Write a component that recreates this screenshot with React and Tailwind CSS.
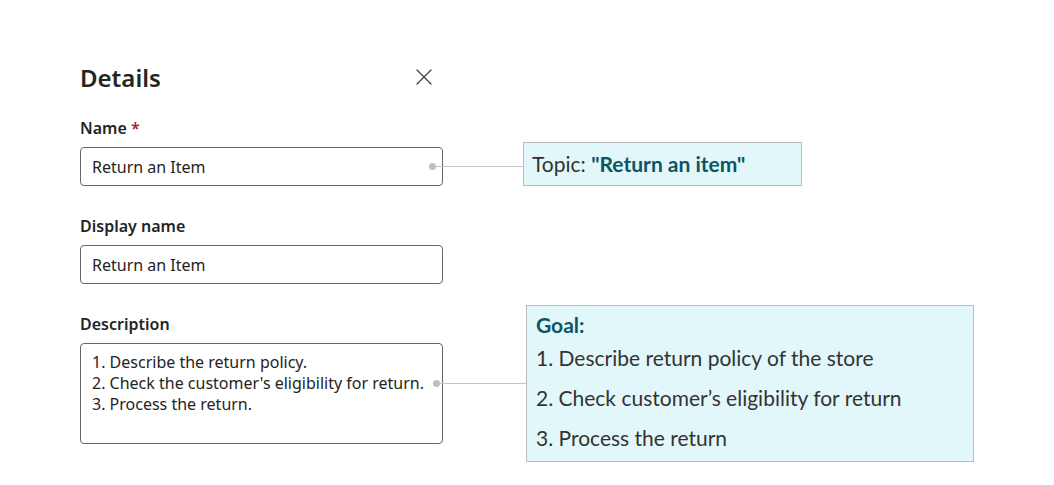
import React from 'react';

const formFont = { fontFamily: '"Noto Sans", "Open Sans", sans-serif' };
const noteFont = { fontFamily: 'Lato, "Noto Sans", sans-serif' };

const Connector = ({ className }) => (
  <div className={`relative flex items-center ${className}`}>
    <span className="w-[7px] h-[7px] rounded-full bg-[#bdbdbd]" />
    <span className="flex-1 h-px bg-[#c4c4c4]" />
  </div>
);

const Label = ({ children, className = '' }) => (
  <div className={`text-[16px] leading-[22px] font-semibold text-[#242424] ${className}`}>{children}</div>
);

const App = () => {
  return (
    <div className="min-h-screen bg-white pl-[80px] pt-[62px]" style={formFont}>
      {/* Header */}
      <div className="w-[363px] flex items-center justify-between">
        <h1 className="text-[24px] leading-[32px] font-semibold text-[#242424]">Details</h1>
        <svg className="w-[16px] h-[16px] mr-[11px] -mt-[2px]" viewBox="0 0 16 16" fill="none">
          <path d="M1 1L15 15M15 1L1 15" stroke="#424242" strokeWidth="1.3" strokeLinecap="round" />
        </svg>
      </div>

      {/* Name */}
      <Label className="mt-[23px]">
        Name <span className="text-[#a4262c]">*</span>
      </Label>
      <div className="mt-[8px] flex items-start">
        <div className="w-[363px] h-[39px] flex items-center px-[11px] border border-[#666] rounded-[4px] bg-white text-[16px] leading-[22px] text-[#242424]">
          Return an Item
        </div>
        <Connector className="-ml-[14px] w-[94px] mt-[16px]" />
        <div
          className="-mt-[5px] w-[279px] h-[44px] flex items-center px-[8px] bg-[#e2f7f9] border border-[#bcbcbc] text-[21px] text-[#333]"
          style={noteFont}
        >
          Topic:&nbsp;<span className="font-bold text-[#0b5566]">"Return an item"</span>
        </div>
      </div>

      {/* Display name */}
      <Label className="mt-[29px]">Display name</Label>
      <div className="mt-[8px] w-[363px] h-[39px] flex items-center px-[11px] border border-[#666] rounded-[4px] bg-white text-[16px] leading-[22px] text-[#242424]">
        Return an Item
      </div>

      {/* Description */}
      <Label className="mt-[29px]">Description</Label>
      <div className="mt-[8px] flex items-start">
        <div className="w-[363px] h-[101px] px-[11px] pt-[8px] border border-[#666] rounded-[4px] bg-white text-[16px] leading-[21px] text-[#242424]">
          <div>1. Describe the return policy.</div>
          <div>2. Check the customer's eligibility for return.</div>
          <div>3. Process the return.</div>
        </div>
        <Connector className="-ml-[10px] w-[93px] mt-[37px]" />
        <div
          className="-mt-[38px] w-[448px] h-[157px] px-[9px] pt-[5px] bg-[#e2f7f9] border border-[#bcbcbc] text-[21px] text-[#333]"
          style={noteFont}
        >
          <div className="font-bold text-[#0b5566] leading-[27px]">Goal:</div>
          <div className="leading-[40px]">1. Describe return policy of the store</div>
          <div className="leading-[40px]">2. Check customer’s eligibility for return</div>
          <div className="leading-[40px]">3. Process the return</div>
        </div>
      </div>
    </div>
  );
};

export default App;
